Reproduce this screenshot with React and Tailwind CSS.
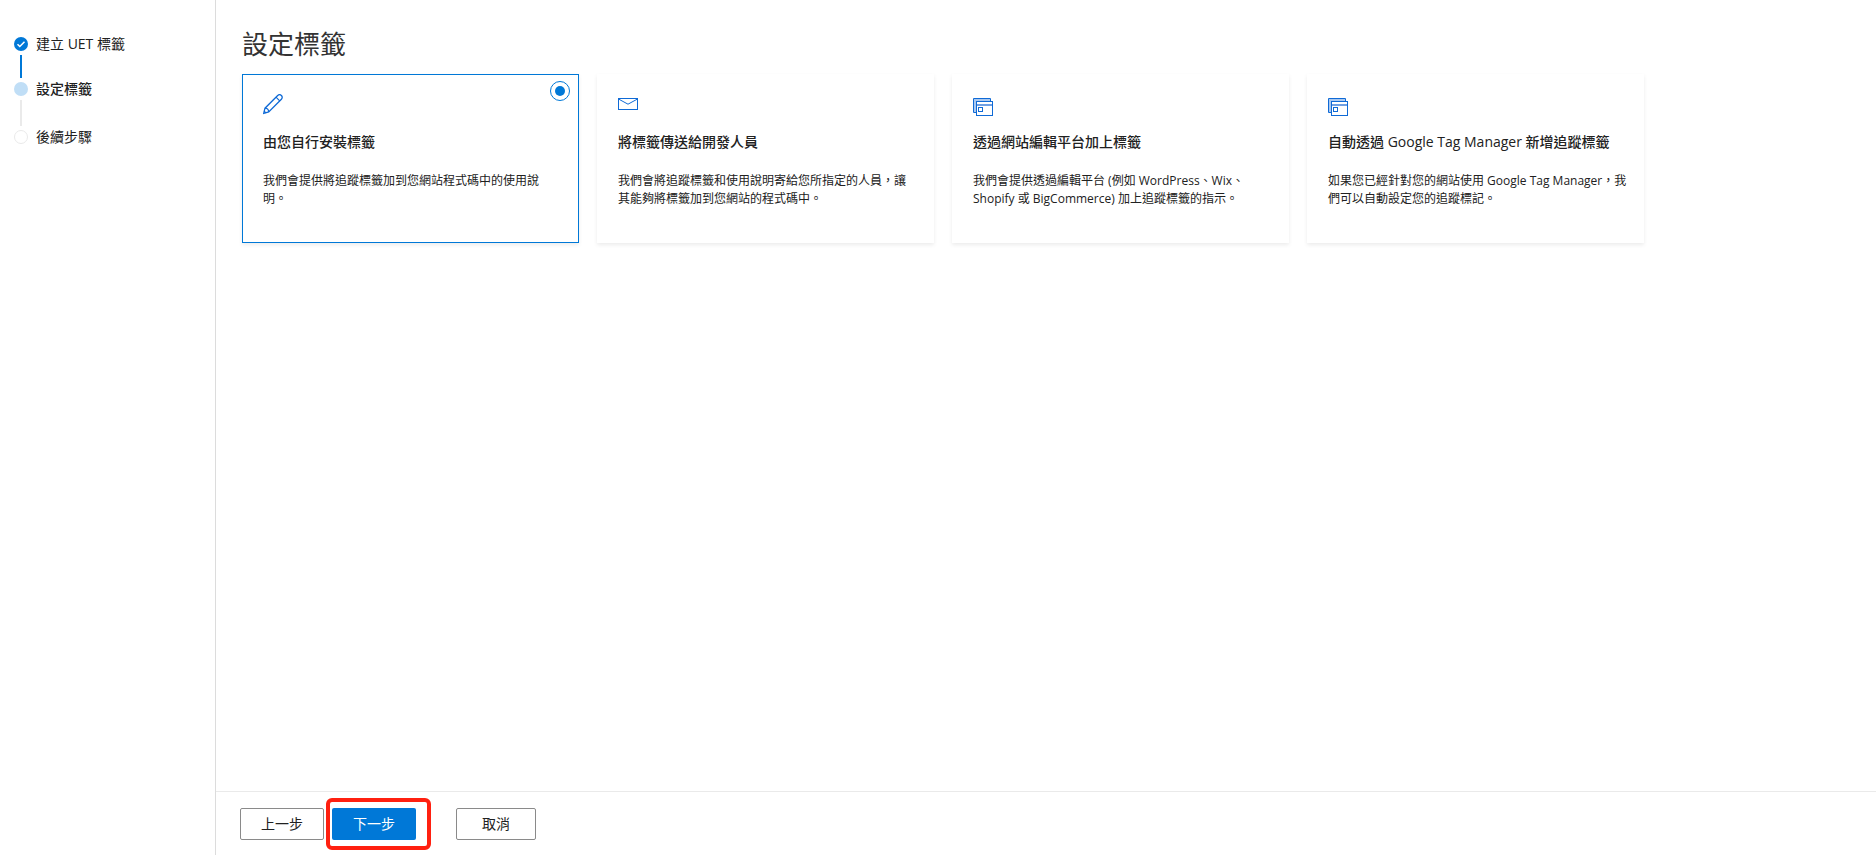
import { useState } from 'react'

const STEPS = [
  { label: '建立 UET 標籤', state: 'done' },
  { label: '設定標籤', state: 'current' },
  { label: '後續步驟', state: 'todo' },
]

function PencilIcon() {
  return (
    <svg viewBox="0 0 20 24" className="h-6 w-5" fill="none" stroke="#0f6ad6" aria-hidden>
      <path d="M.7 19.4 2 14.200 14.700 1.500c1.100-1.100 2.600-1.100 3.700 0s1.100 2.600 0 3.700L5.700 17.900.7 19.400Z" strokeWidth="1.300" />
      <path d="m13 3.200 3.700 3.700M2 14.200c2 .1 3.600 1.600 3.700 3.700M1.200 17.200l1.700 1.700" strokeWidth="1.200" />
    </svg>
  )
}

function MailIcon() {
  return (
    <svg viewBox="0 0 20 24" className="h-6 w-5" fill="none" stroke="#0f6ad6" aria-hidden>
      <rect x=".5" y="4.500" width="19" height="11" />
      <path d="m.5 5 9.500 5.200L19.500 5" />
    </svg>
  )
}

function PlatformIcon() {
  return (
    <svg viewBox="0 0 20 24" className="h-6 w-5" fill="none" stroke="#0f6ad6" aria-hidden>
      <path d="M1 5h16v2H3v11H1Z" fill="#a9c8f0" stroke="none" />
      <path d="M3 18.500H.5v-14h17V7" />
      <rect x="3.500" y="7.500" width="16" height="14" fill="#fff" />
      <path d="M4 11h15" stroke="#6f9fe3" strokeWidth="2" />
      <rect x="5.500" y="13.500" width="4" height="4" />
    </svg>
  )
}

const OPTIONS = [
  {
    id: 'self',
    Icon: PencilIcon,
    title: '由您自行安裝標籤',
    description: '我們會提供將追蹤標籤加到您網站程式碼中的使用說明。',
  },
  {
    id: 'developer',
    Icon: MailIcon,
    title: '將標籤傳送給開發人員',
    description: '我們會將追蹤標籤和使用說明寄給您所指定的人員，讓其能夠將標籤加到您網站的程式碼中。',
  },
  {
    id: 'platform',
    Icon: PlatformIcon,
    title: '透過網站編輯平台加上標籤',
    description: '我們會提供透過編輯平台 (例如 WordPress、Wix、Shopify 或 BigCommerce) 加上追蹤標籤的指示。',
  },
  {
    id: 'gtm',
    Icon: PlatformIcon,
    title: '自動透過 Google Tag Manager 新增追蹤標籤',
    description: '如果您已經針對您的網站使用 Google Tag Manager，我們可以自動設定您的追蹤標記。',
  },
]

function StepMarker({ state }) {
  if (state === 'done') {
    return (
      <span className="flex size-[14px] items-center justify-center rounded-full bg-[#0078d7]">
        <svg viewBox="0 0 14 14" className="size-[14px]" fill="none" stroke="#fff" strokeWidth="1.500" aria-hidden>
          <path d="m3.500 7.200 2.300 2.300 4.700-4.700" />
        </svg>
      </span>
    )
  }
  if (state === 'current') {
    return <span className="size-[14px] rounded-full bg-[#c0def6]" />
  }
  return <span className="size-[14px] rounded-full border border-[#eaeaea]" />
}

function Steps() {
  return (
    <ol className="px-[14px] pt-[34px]">
      {STEPS.map((step, i) => (
        <li key={step.label}>
          <div className="flex h-5 items-center gap-2">
            <StepMarker state={step.state} />
            <span className={step.state === 'current' ? 'font-medium' : ''}>{step.label}</span>
          </div>
          {i < STEPS.length - 1 && (
            <span
              className={`my-px ml-[6px] block w-[2px] ${
                step.state === 'done' ? 'h-[23px] bg-[#0078d7]' : 'h-[26px] bg-[#eaeaea]'
              }`}
            />
          )}
        </li>
      ))}
    </ol>
  )
}

function OptionCard({ option, selected, onSelect }) {
  const { id, Icon, title, description } = option
  return (
    <label
      className={`relative block min-h-[169px] cursor-pointer border pt-[19px] pr-4 pb-6 pl-5 shadow-[0_2px_4px_rgba(0,0,0,0.08)] ${
        selected ? 'border-[#0078d7]' : 'border-transparent'
      }`}
    >
      <input
        type="radio"
        name="install-method"
        value={id}
        checked={selected}
        onChange={() => onSelect(id)}
        className="absolute top-[6px] right-2 size-5 appearance-none rounded-full border border-[#0078d7] bg-[#0078d7] bg-clip-content p-1 opacity-0 checked:opacity-100"
      />
      <Icon />
      <span className="mt-[14px] block text-sm leading-5 font-medium">{title}</span>
      <span className="mt-5 block text-xs leading-[18px]">{description}</span>
    </label>
  )
}

export default function App() {
  const [method, setMethod] = useState('self')

  return (
    <div
      lang="zh-Hant"
      className="flex min-h-screen bg-white font-['Open_Sans','Noto_Sans_CJK_TC',sans-serif] text-sm text-[#212121]"
    >
      <nav className="w-[216px] shrink-0 border-r border-[#dcdcdc]" aria-label="設定標籤">
        <Steps />
      </nav>

      <div className="flex min-w-0 flex-1 flex-col">
        <main className="flex-1 px-[26px] pt-7">
          <h1 className="text-[26px] leading-8 text-[#333]">設定標籤</h1>
          <div className="mt-[14px] grid max-w-[1402px] grid-cols-4 gap-[18px]">
            {OPTIONS.map((option) => (
              <OptionCard
                key={option.id}
                option={option}
                selected={method === option.id}
                onSelect={setMethod}
              />
            ))}
          </div>
        </main>

        <footer className="flex border-t border-[#eaeaea] px-6 pt-4 pb-[15px]">
          <button type="button" className="h-8 w-[84px] rounded-xs border border-[#8a8a8a]">
            上一步
          </button>
          <div className="relative ml-2">
            <button type="button" className="h-8 w-[84px] rounded-xs bg-[#0078d7] text-white">
              下一步
            </button>
            <span className="pointer-events-none absolute -top-[10px] -left-[6px] h-[52px] w-[105px] rounded-md border-4 border-[#ff2010]" />
          </div>
          <button type="button" className="ml-10 h-8 w-20 rounded-xs border border-[#8a8a8a]">
            取消
          </button>
        </footer>
      </div>
    </div>
  )
}
